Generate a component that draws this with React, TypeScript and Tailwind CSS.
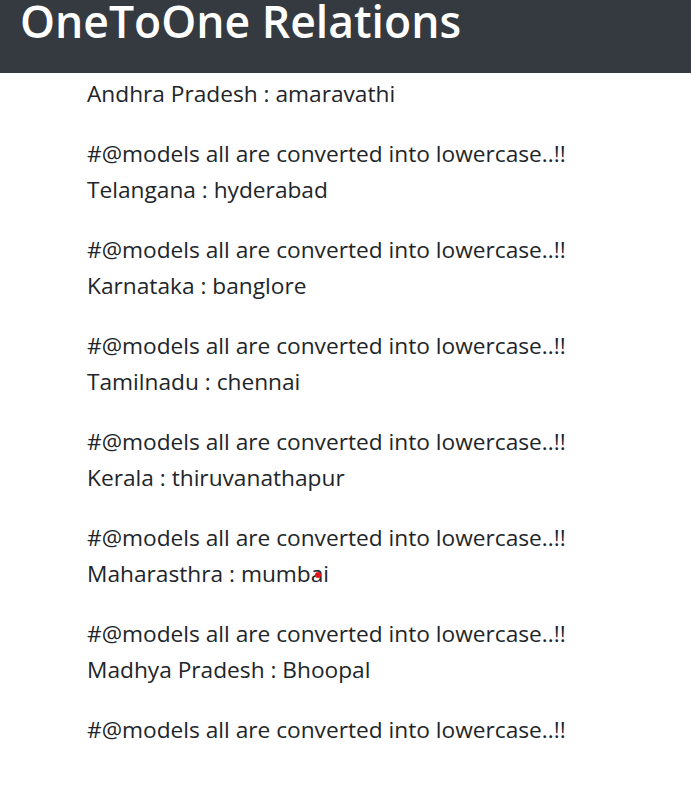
const states = [
  { name: 'Telangana', capital: 'hyderabad' },
  { name: 'Karnataka', capital: 'banglore' },
  { name: 'Tamilnadu', capital: 'chennai' },
  { name: 'Kerala', capital: 'thiruvanathapur' },
  { name: 'Maharasthra', capital: 'mumbai' },
  { name: 'Madhya Pradesh', capital: 'Bhoopal' },
];

const note = '#@models all are converted into lowercase..!!';

export default function App() {
  return (
    <div className="min-h-screen bg-white font-['Open_Sans',sans-serif] text-[#212529]">
      {/* Header */}
      <header className="h-[73px] overflow-hidden bg-[#343a40]">
        <h1 className="-mt-[3px] pl-5 text-[44.5px] font-semibold leading-[48px] text-white">
          OneToOne Relations
        </h1>
      </header>

      {/* States list */}
      <div className="flex flex-col gap-6 pt-[3px] pl-[87px] text-[22.7px] leading-9">
        <p>Andhra Pradesh : amaravathi</p>
        {states.map((s) => (
          <p key={s.name}>
            {note}
            <br />
            {s.name} :{' '}
            {s.capital === 'mumbai' ? (
              <span className="relative">
                mumbai
                <span className="absolute top-[14px] left-[74px] h-[6px] w-[6px] rounded-full bg-[#e8141c]"></span>
              </span>
            ) : (
              s.capital
            )}
          </p>
        ))}
        <p>{note}</p>
      </div>
    </div>
  );
}
